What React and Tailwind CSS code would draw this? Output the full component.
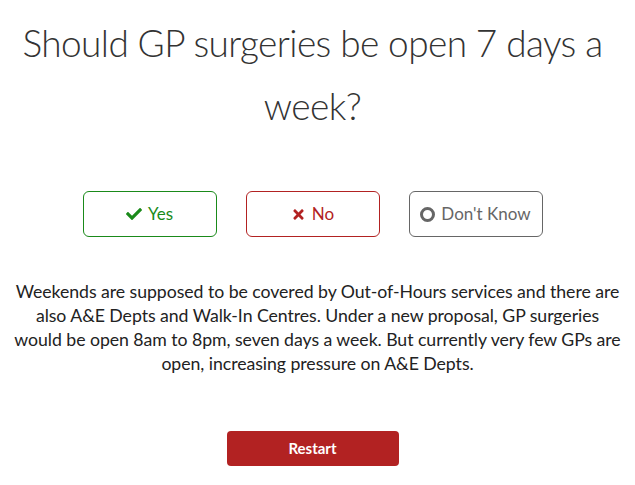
import React from 'react';
import { FaCheck, FaTimes } from 'react-icons/fa';

export default function App() {
  return (
    <div className="min-h-screen bg-white font-['Lato','Open_Sans',sans-serif] text-center">
      {/* Question */}
      <h1 className="pt-[11px] pr-[10px] text-[37px] leading-[63px] font-light tracking-[-0.6px] text-[#333]">
        Should GP surgeries be open 7 days a<br />week?
      </h1>

      {/* Answers */}
      <div className="mt-[54px] pr-[10px] flex justify-center gap-[29px]">
        <button className="w-[134px] h-[46px] rounded-md border border-[#1a8a1a] text-[#1a8a1a] text-[17px] flex items-center justify-center gap-1.5">
          <FaCheck className="w-[16px] h-[16px]" />
          Yes
        </button>
        <button className="w-[134px] h-[46px] rounded-md border border-[#b22222] text-[#b22222] text-[17px] flex items-center justify-center gap-1.5">
          <FaTimes className="w-[15px] h-[15px]" />
          No
        </button>
        <button className="w-[134px] h-[46px] rounded-md border border-[#666] text-[#666] text-[17px] flex items-center justify-center gap-1.5">
          <span className="w-[15px] h-[15px] rounded-full border-[3px] border-[#666]" />
          Don't Know
        </button>
      </div>

      {/* Explanation */}
      <p className="mt-[43px] text-[17.7px] leading-[24px] tracking-[-0.05px] text-[#222] whitespace-nowrap">
        Weekends are supposed to be covered by Out-of-Hours services and there are<br />
        also A&amp;E Depts and Walk-In Centres. Under a new proposal, GP surgeries<br />
        would be open 8am to 8pm, seven days a week. But currently very few GPs are<br />
        open, increasing pressure on A&amp;E Depts.
      </p>

      <div className="mt-[55px] pr-[10px] flex justify-center">
        <button className="w-[172px] h-[35px] rounded-sm bg-[#b22222] text-white text-[15px] font-bold">
          Restart
        </button>
      </div>
    </div>
  );
}
